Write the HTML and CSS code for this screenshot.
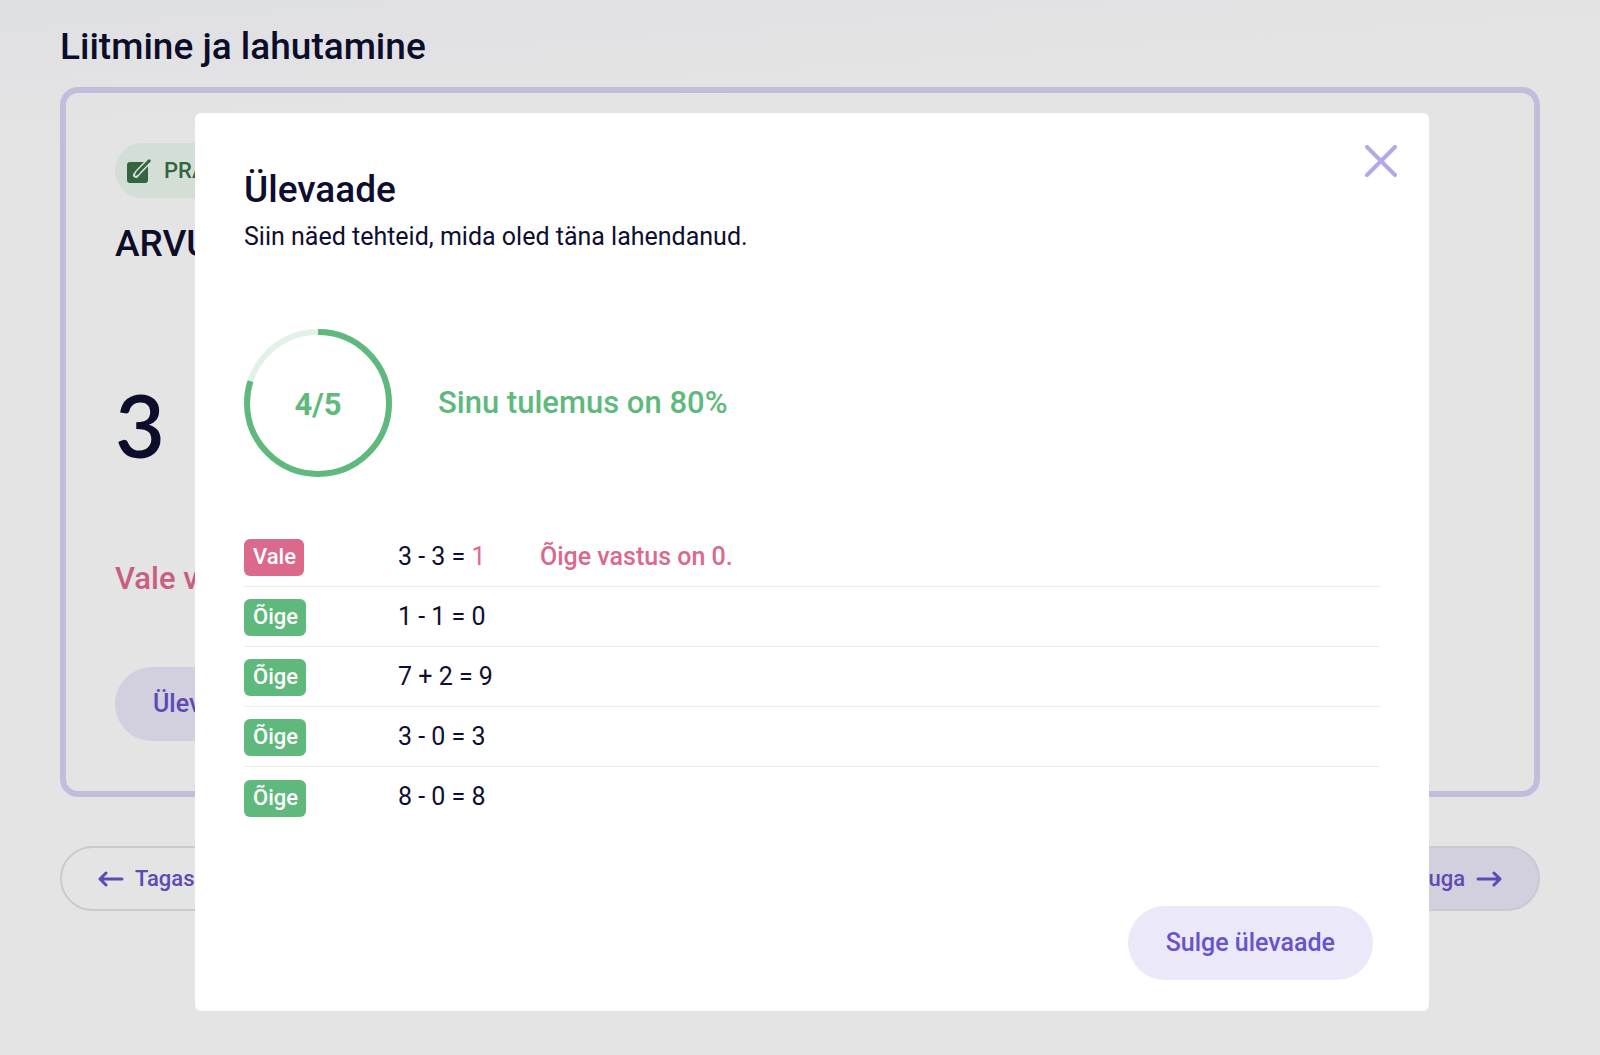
FILE: index.html
```html
<!DOCTYPE html>
<html lang="et">
<head>
<meta charset="utf-8">
<meta name="viewport" content="width=device-width, initial-scale=1">
<title>Liitmine ja lahutamine</title>
<link rel="stylesheet" href="styles.css">
</head>
<body>
<main class="page">
  <h1 class="page-title">Liitmine ja lahutamine</h1>
  <section class="card">
    <span class="tag">
      <svg class="tag-icon" viewBox="0 0 24 24" aria-hidden="true">
        <rect class="tag-paper" x="0" y="3" width="21" height="21" rx="3"/>
        <path class="tag-gap" d="M22.200 1.800L11.500 12.800L9 16"/>
        <path class="tag-pen" d="M22.200 1.800L11.500 12.800"/>
        <path class="tag-nib" d="M10.400 11.700C8.800 13.500 8 15.300 8 16.800C9.800 16.800 11.200 15.700 12.700 13.900"/>
      </svg>
      PRAKS
    </span>
    <h2 class="card-title">ARVUD</h2>
    <p class="task">3</p>
    <p class="verdict">Vale v</p>
    <button class="button" type="button">Ülevaade</button>
  </section>
  <nav class="pager">
    <a class="pager-link" href="#tagasi">
      <svg class="arrow" viewBox="0 0 26 16" aria-hidden="true"><path d="M24 8H2M8 2L2 8L8 14"/></svg>
      Tagasi
    </a>
    <a class="pager-link pager-next" href="#edasi">
      Jätka valikuga
      <svg class="arrow" viewBox="0 0 26 16" aria-hidden="true"><path d="M2 8H24M18 2L24 8L18 14"/></svg>
    </a>
  </nav>
</main>

<div class="overlay">
  <div class="modal" role="dialog" aria-modal="true" aria-labelledby="modal-title">
    <button class="close" type="button" aria-label="Sulge">
      <svg viewBox="0 0 32 32" aria-hidden="true"><path d="M2 2L30 30M30 2L2 30"/></svg>
    </button>
    <h2 class="modal-title" id="modal-title">Ülevaade</h2>
    <p class="modal-lead">Siin näed tehteid, mida oled täna lahendanud.</p>
    <div class="result">
      <div class="ring">
        <svg viewBox="0 0 148 148" aria-hidden="true">
          <circle class="ring-track" cx="74" cy="74" r="71"/>
          <circle class="ring-value" cx="74" cy="74" r="71" pathLength="100" transform="rotate(-90 74 74)"/>
        </svg>
        <span class="ring-score">4/5</span>
      </div>
      <p class="result-text">Sinu tulemus on 80%</p>
    </div>
    <table class="answers">
      <tbody>
        <tr><td class="status"><span class="badge badge-wrong">Vale</span></td><td class="sum">3 - 3 = <span class="wrong">1</span></td><td class="hint">Õige vastus on 0.</td></tr>
        <tr><td class="status"><span class="badge">Õige</span></td><td class="sum">1 - 1 = 0</td><td class="hint"></td></tr>
        <tr><td class="status"><span class="badge">Õige</span></td><td class="sum">7 + 2 = 9</td><td class="hint"></td></tr>
        <tr><td class="status"><span class="badge">Õige</span></td><td class="sum">3 - 0 = 3</td><td class="hint"></td></tr>
        <tr><td class="status"><span class="badge">Õige</span></td><td class="sum">8 - 0 = 8</td><td class="hint"></td></tr>
      </tbody>
    </table>
    <div class="modal-actions">
      <button class="button" type="button">Sulge ülevaade</button>
    </div>
  </div>
</div>
</body>
</html>
```
FILE: styles.css
```css
* {
  box-sizing: border-box;
}

body {
  margin: 0;
  min-height: 100vh;
  background: linear-gradient(176deg, #fafbff, #fdfdff 80px, #ffffff 150px);
  color: #0e0f30;
  font-family: Roboto, sans-serif;
  font-size: 25px;
  line-height: 28px;
}

h1,
h2,
p {
  margin: 0;
}

.page {
  padding: 26px 60px 60px;
}

.page-title,
.card-title,
.modal-title {
  font-size: 37px;
  font-weight: 500;
  line-height: 42px;
}

.card {
  display: flex;
  flex-direction: column;
  align-items: flex-start;
  margin-top: 19px;
  padding: 50px 49px;
  border: 6px solid #dad4f8;
  border-radius: 18px;
}

.tag {
  display: flex;
  align-items: center;
  gap: 13px;
  height: 55px;
  padding: 0 20px 0 12px;
  border-radius: 28px;
  background: #ecf9f1;
  color: #387148;
  font-size: 22px;
  font-weight: 500;
}

.tag-icon {
  width: 24px;
  height: 24px;
}

.tag-paper {
  fill: #387148;
}

.tag-gap {
  fill: none;
  stroke: #ecf9f1;
  stroke-width: 6;
  stroke-linecap: round;
  stroke-linejoin: round;
}

.tag-pen {
  fill: none;
  stroke: #387148;
  stroke-width: 3;
  stroke-linecap: round;
}

.tag-nib {
  fill: #387148;
}

.card-title {
  margin-top: 25px;
}

.task {
  margin-top: 100px;
  font-family: Lato, sans-serif;
  font-size: 86px;
  font-weight: 600;
  line-height: 120px;
}

.verdict {
  margin-top: 76px;
  color: #df6c90;
  font-size: 31px;
  font-weight: 500;
  line-height: 36px;
}

.button {
  height: 74px;
  padding: 0 38px;
  border: 0;
  border-radius: 37px;
  background: #ebe8fa;
  color: #6a52cb;
  font: 500 25px/28px Roboto, sans-serif;
}

.card .button {
  margin-top: 70px;
}

.pager {
  display: flex;
  justify-content: space-between;
  margin-top: 49px;
}

.pager-link {
  display: flex;
  align-items: center;
  gap: 11px;
  height: 65px;
  padding: 0 36px;
  border: 2px solid #e2e2ea;
  border-radius: 33px;
  color: #6a52cb;
  font-size: 22px;
  font-weight: 500;
  text-decoration: none;
}

.pager-next {
  background: #ebe8fa;
}

.arrow {
  width: 26px;
  height: 16px;
  fill: none;
  stroke: #6a52cb;
  stroke-width: 3;
  stroke-linecap: round;
  stroke-linejoin: round;
}

.overlay {
  position: fixed;
  inset: 0;
  overflow: auto;
  padding: 113px 171px 44px 195px;
  background: rgba(0, 0, 0, 0.105);
}

.modal {
  position: relative;
  padding: 56px 49px 31px;
  border-radius: 6px;
  background: #ffffff;
}

.close {
  position: absolute;
  top: 32px;
  right: 32px;
  width: 32px;
  height: 32px;
  padding: 0;
  border: 0;
  background: none;
}

.close svg {
  display: block;
  fill: none;
  stroke: #b3a8e8;
  stroke-width: 4;
  stroke-linecap: round;
}

.modal-lead {
  margin-top: 12px;
}

.result {
  display: flex;
  align-items: center;
  gap: 46px;
  margin-top: 78px;
}

.ring {
  display: grid;
  place-items: center;
  width: 148px;
  height: 148px;
}

.ring > * {
  grid-area: 1 / 1;
}

.ring svg {
  width: 148px;
  height: 148px;
  fill: none;
  stroke-width: 6;
}

.ring-track {
  stroke: #e2f2e9;
}

.ring-value {
  stroke: #5fb97d;
  stroke-dasharray: 80 20;
}

.ring-score,
.result-text {
  color: #5fb97d;
  font-size: 31px;
  font-weight: 500;
  line-height: 36px;
}

.ring-score {
  padding-top: 3px;
  font-weight: 700;
}

.answers {
  width: 100%;
  margin-top: 50px;
  border-spacing: 0;
}

.answers td {
  height: 60px;
  padding: 0;
  border-bottom: 1px solid #ececf0;
}

.answers tr:last-child td {
  border-bottom: 0;
}

.answers .status {
  width: 154px;
  padding-top: 2px;
}

.sum {
  width: 142px;
}

.badge {
  display: block;
  width: fit-content;
  padding: 4px 8px 5px 9px;
  border-radius: 6px;
  background: #5fb97d;
  color: #ffffff;
  font-size: 22px;
  font-weight: 500;
}

.badge-wrong {
  background: #db698c;
}

.wrong,
.hint {
  color: #db698c;
}

.hint {
  font-weight: 500;
}

.modal-actions {
  display: flex;
  justify-content: flex-end;
  margin-top: 79px;
  padding-right: 7px;
}
```
